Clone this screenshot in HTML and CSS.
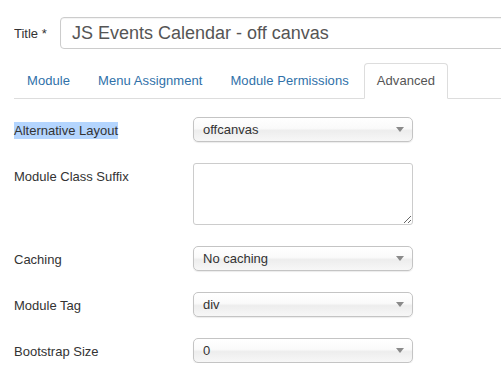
FILE: index.html
```html
<!DOCTYPE html>
<html lang="en">
<head>
    <meta charset="UTF-8">
    <title>Module: JS Events Calendar - Advanced</title>
    <link rel="stylesheet" href="styles.css">
</head>
<body>
    <div class="title-row">
        <label class="title-label" for="jform_title">Title *</label>
        <input class="title-input" id="jform_title" type="text" value="JS Events Calendar - off canvas">
    </div>

    <ul class="nav-tabs">
        <li><a href="#general">Module</a></li>
        <li><a href="#assignment">Menu Assignment</a></li>
        <li><a href="#permissions">Module Permissions</a></li>
        <li class="active"><a href="#advanced">Advanced</a></li>
    </ul>

    <div class="form-grid">
        <label class="control-label"><span class="selected-text">Alternative Layout</span></label>
        <div class="select-wrap">
            <select class="form-select"><option>offcanvas</option></select>
        </div>

        <label class="control-label">Module Class Suffix</label>
        <textarea class="form-textarea"></textarea>

        <label class="control-label">Caching</label>
        <div class="select-wrap">
            <select class="form-select"><option>No caching</option></select>
        </div>

        <label class="control-label">Module Tag</label>
        <div class="select-wrap">
            <select class="form-select"><option>div</option></select>
        </div>

        <label class="control-label">Bootstrap Size</label>
        <div class="select-wrap">
            <select class="form-select"><option>0</option></select>
        </div>
    </div>
</body>
</html>
```

FILE: styles.css
```css
body {
    margin: 0;
    padding: 17px 0 0 14px;
    font-family: "Liberation Sans", Arial, sans-serif;
    font-size: 13px;
    color: #333;
    background: #fff;
}

/* the title field runs on past the right edge of the window */
.title-row {
    display: flex;
    align-items: center;
    overflow: hidden;
}

.title-label {
    width: 46px;
    flex-shrink: 0;
    font-size: 13px;
}

.title-input {
    box-sizing: border-box;
    width: 470px;
    flex-shrink: 0;
    height: 32px;
    padding: 0 11px;
    border: 1px solid #ccc;
    border-radius: 4px;
    font-family: inherit;
    font-size: 18px;
    color: #555;
    box-shadow: inset 0 1px 1px rgba(0,0,0,0.05);
}

.nav-tabs {
    display: flex;
    list-style: none;
    margin: 14px 0 0;
    padding: 0;
    border-bottom: 1px solid #ddd;
}

.nav-tabs li {
    margin-bottom: -1px;
    margin-right: 2px;
}

.nav-tabs a {
    display: block;
    padding: 8px 12px;
    line-height: 18px;
    letter-spacing: 0.07px;
    border: 1px solid transparent;
    border-radius: 4px 4px 0 0;
    color: #3071a9;
    text-decoration: none;
}

.nav-tabs .active a {
    color: #555;
    background: #fff;
    border-color: #ddd #ddd transparent;
}

.form-grid {
    display: grid;
    grid-template-columns: 179px 220px;
    row-gap: 21px;
    margin-top: 18px;
}

.control-label {
    padding-top: 5px;
    line-height: 18px;
}

.selected-text {
    background: #b4d5fe;
    padding: 1px 0;
}

.select-wrap {
    position: relative;
    height: 25px;
}

.select-wrap::after {
    content: "";
    position: absolute;
    right: 9px;
    top: 10px;
    border-left: 4px solid transparent;
    border-right: 4px solid transparent;
    border-top: 5px solid #8a8a8a;
    pointer-events: none;
}

.form-select {
    -webkit-appearance: none;
    appearance: none;
    box-sizing: border-box;
    width: 220px;
    height: 25px;
    padding: 0 24px 0 9px;
    border: 1px solid #c4c4c4;
    border-radius: 5px;
    background: linear-gradient(#fff, #fafafa 45%, #ededed 55%, #f7f7f7);
    box-shadow: 0 1px 1px rgba(0,0,0,0.08);
    font-family: inherit;
    font-size: 13px;
    color: #333;
}

.form-textarea {
    box-sizing: border-box;
    width: 220px;
    height: 62px;
    margin: 0;
    border: 1px solid #ccc;
    border-radius: 3px;
    font-family: inherit;
    font-size: 13px;
}
```
